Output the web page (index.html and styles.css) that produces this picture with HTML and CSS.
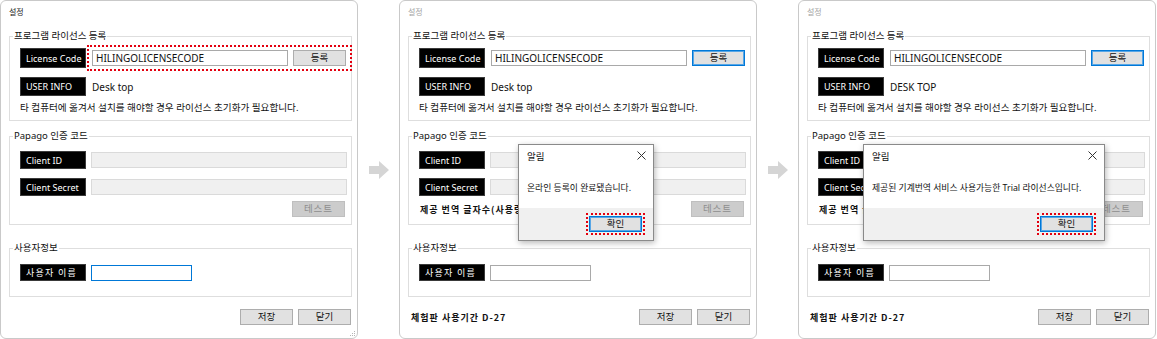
FILE: index.html
```html
<!DOCTYPE html>
<html>

<head>
    <meta charset="utf-8">
    <title>라이선스 등록</title>
    <link rel="stylesheet" href="styles.css">
</head>

<body>
    <div class="flow">

        <!-- Step 1: settings window before registration -->
        <div class="window">
            <div class="win-title">설정</div>

            <fieldset class="group g-license">
                <legend>프로그램 라이선스 등록</legend>
                <div class="row r-code">
                    <span class="tag">License Code</span>
                    <div class="code-box marked">
                        <div class="field f-code">HILINGOLICENSECODE</div>
                        <button class="btn">등록</button>
                    </div>
                </div>
                <div class="row r-info">
                    <span class="tag">USER INFO</span>
                    <span class="info">Desk top</span>
                </div>
                <p class="note">타 컴퓨터에 옮겨서 설치를 해야할 경우 라이선스 초기화가 필요합니다.</p>
            </fieldset>

            <fieldset class="group g-papago">
                <legend>Papago 인증 코드</legend>
                <div class="row r-key">
                    <span class="tag">Client ID</span>
                    <div class="field f-key off"></div>
                </div>
                <div class="row r-key">
                    <span class="tag">Client Secret</span>
                    <div class="field f-key off"></div>
                </div>
                <div class="row r-test">
                    <button class="btn off">테스트</button>
                </div>
            </fieldset>

            <fieldset class="group g-user">
                <legend>사용자정보</legend>
                <div class="row r-user">
                    <span class="tag spaced">사용자 이름</span>
                    <div class="field f-user focus"></div>
                </div>
            </fieldset>

            <div class="footer">
                <span></span>
                <div class="btns">
                    <button class="btn">저장</button>
                    <button class="btn">닫기</button>
                </div>
            </div>

            <svg class="grip" width="8" height="8" viewBox="0 0 8 8">
                <rect x="6" y="2" width="1" height="1" fill="#b5b5b5"/>
                <rect x="4" y="4" width="1" height="1" fill="#b5b5b5"/>
                <rect x="6" y="4" width="1" height="1" fill="#b5b5b5"/>
                <rect x="2" y="6" width="1" height="1" fill="#b5b5b5"/>
                <rect x="4" y="6" width="1" height="1" fill="#b5b5b5"/>
                <rect x="6" y="6" width="1" height="1" fill="#b5b5b5"/>
            </svg>
        </div>

        <div class="arrow">
            <svg width="20" height="18" viewBox="0 0 20 18">
                <polygon points="0,5 10,5 10,0 20,9 10,18 10,13 0,13" fill="#d5d5d5"/>
            </svg>
        </div>

        <!-- Step 2: online registration done -->
        <div class="window inactive">
            <div class="win-title">설정</div>

            <fieldset class="group g-license">
                <legend>프로그램 라이선스 등록</legend>
                <div class="row r-code">
                    <span class="tag">License Code</span>
                    <div class="code-box">
                        <div class="field f-code">HILINGOLICENSECODE</div>
                        <button class="btn focus">등록</button>
                    </div>
                </div>
                <div class="row r-info">
                    <span class="tag">USER INFO</span>
                    <span class="info">Desk top</span>
                </div>
                <p class="note">타 컴퓨터에 옮겨서 설치를 해야할 경우 라이선스 초기화가 필요합니다.</p>
            </fieldset>

            <fieldset class="group g-papago">
                <legend>Papago 인증 코드</legend>
                <div class="row r-key">
                    <span class="tag">Client ID</span>
                    <div class="field f-key off"></div>
                </div>
                <div class="row r-key">
                    <span class="tag">Client Secret</span>
                    <div class="field f-key off"></div>
                </div>
                <div class="row r-test">
                    <span class="strong">제공 번역 글자수(사용량) : 0</span>
                    <button class="btn off">테스트</button>
                </div>
            </fieldset>

            <fieldset class="group g-user">
                <legend>사용자정보</legend>
                <div class="row r-user">
                    <span class="tag spaced">사용자 이름</span>
                    <div class="field f-user"></div>
                </div>
            </fieldset>

            <div class="footer">
                <span class="strong">체험판 사용기간 D-27</span>
                <div class="btns">
                    <button class="btn">저장</button>
                    <button class="btn">닫기</button>
                </div>
            </div>

            <div class="alert a-small">
                <div class="alert-head">
                    <span>알림</span>
                    <svg width="9" height="9" viewBox="0 0 9 9">
                        <path d="M0.5 0.5 L8.5 8.5 M8.5 0.5 L0.5 8.5" stroke="#333" stroke-width="1"/>
                    </svg>
                </div>
                <div class="alert-body">온라인 등록이 완료됐습니다.</div>
                <div class="alert-foot">
                    <button class="btn focus marked-sm">확인</button>
                </div>
            </div>
        </div>

        <div class="arrow">
            <svg width="20" height="18" viewBox="0 0 20 18">
                <polygon points="0,5 10,5 10,0 20,9 10,18 10,13 0,13" fill="#d5d5d5"/>
            </svg>
        </div>

        <!-- Step 3: trial license notice -->
        <div class="window inactive">
            <div class="win-title">설정</div>

            <fieldset class="group g-license">
                <legend>프로그램 라이선스 등록</legend>
                <div class="row r-code">
                    <span class="tag">License Code</span>
                    <div class="code-box">
                        <div class="field f-code">HILINGOLICENSECODE</div>
                        <button class="btn focus">등록</button>
                    </div>
                </div>
                <div class="row r-info">
                    <span class="tag">USER INFO</span>
                    <span class="info">DESK TOP</span>
                </div>
                <p class="note">타 컴퓨터에 옮겨서 설치를 해야할 경우 라이선스 초기화가 필요합니다.</p>
            </fieldset>

            <fieldset class="group g-papago">
                <legend>Papago 인증 코드</legend>
                <div class="row r-key">
                    <span class="tag">Client ID</span>
                    <div class="field f-key off"></div>
                </div>
                <div class="row r-key">
                    <span class="tag">Client Secret</span>
                    <div class="field f-key off"></div>
                </div>
                <div class="row r-test">
                    <span class="strong">제공 번역 글자수(사용량) : 0</span>
                    <button class="btn off">테스트</button>
                </div>
            </fieldset>

            <fieldset class="group g-user">
                <legend>사용자정보</legend>
                <div class="row r-user">
                    <span class="tag spaced">사용자 이름</span>
                    <div class="field f-user"></div>
                </div>
            </fieldset>

            <div class="footer">
                <span class="strong">체험판 사용기간 D-27</span>
                <div class="btns">
                    <button class="btn">저장</button>
                    <button class="btn">닫기</button>
                </div>
            </div>

            <div class="alert a-wide">
                <div class="alert-head">
                    <span>알림</span>
                    <svg width="9" height="9" viewBox="0 0 9 9">
                        <path d="M0.5 0.5 L8.5 8.5 M8.5 0.5 L0.5 8.5" stroke="#333" stroke-width="1"/>
                    </svg>
                </div>
                <div class="alert-body">제공된 기계번역 서비스 사용가능한 Trial 라이선스입니다.</div>
                <div class="alert-foot">
                    <button class="btn focus marked-sm">확인</button>
                </div>
            </div>
        </div>

    </div>
</body>

</html>
```

FILE: styles.css
```css
* {
    box-sizing: border-box;
}

body {
    margin: 0;
    background-color: #fff;
    font-family: "Noto Sans", "Noto Sans CJK KR", sans-serif;
    color: #000;
}

.flow {
    display: flex;
    align-items: flex-start;
}

.arrow {
    width: 41px;
    height: 339px;
    display: flex;
    align-items: center;
    justify-content: center;
}

/* window frame */
.window {
    position: relative;
    width: 358px;
    height: 339px;
    border: 1px solid #c9c9c9;
    border-radius: 6px;
    padding: 3px 5px 0 8px;
    background-color: #fff;
}

.win-title {
    height: 16px;
    line-height: 16px;
    font-size: 8px;
    color: #222;
}

.inactive .win-title {
    color: #a3a3a3;
}

/* group boxes */
.group {
    margin: 0;
    padding: 0 4px 0 0;
    border: 1px solid #dedede;
    min-width: 0;
}

.group legend {
    margin-left: 3px;
    padding: 0 1px;
    font-size: 9.5px;
    line-height: 14px;
    color: #111;
}

.g-license {
    margin-top: 9px;
    padding-top: 5px;
    padding-bottom: 5px;
}

.g-papago {
    margin-top: 8px;
    padding-top: 8px;
    padding-bottom: 7px;
}

.g-user {
    margin-top: 16px;
    padding-top: 9px;
    padding-bottom: 15px;
}

.row {
    display: flex;
    align-items: center;
    padding-left: 10px;
}

.r-code {
    height: 20px;
}

.r-info {
    height: 19px;
    margin-top: 9px;
}

.r-key {
    height: 18px;
}

.r-key + .r-key {
    margin-top: 9px;
}

.r-test {
    height: 16px;
    margin-top: 5px;
    justify-content: space-between;
    padding-left: 11px;
    padding-right: 2px;
}

.r-test .btn {
    margin-left: auto;
}

.r-user {
    height: 17px;
}

.tag {
    width: 66px;
    height: 100%;
    flex: none;
    background-color: #000;
    color: #fff;
    font-size: 9px;
    line-height: 1;
    padding-left: 5px;
    display: flex;
    align-items: center;
    border: 1px solid #3a3a3a;
}

.tag.spaced {
    letter-spacing: 1.2px;
}

.info {
    margin-left: 6px;
    font-size: 10px;
    color: #111;
}

.note {
    margin: 5px 0 0;
    padding-left: 10px;
    font-size: 9.6px;
    line-height: 14px;
    color: #111;
    white-space: nowrap;
}

/* text boxes */
.field {
    height: 16px;
    border: 1px solid #a9a9a9;
    background-color: #fff;
    font-size: 10px;
    line-height: 14px;
    padding-left: 3px;
    color: #111;
}

.field.off {
    background-color: #f0f0f0;
    border-color: #dadada;
}

.field.focus {
    border-color: #0078d7;
}

.f-code {
    width: 196px;
}

.f-key {
    width: 256px;
    margin-left: 5px;
}

.f-user {
    width: 101px;
    margin-left: 5px;
}

.code-box {
    display: flex;
    gap: 5px;
    margin-left: 6px;
}

/* red dotted highlight */
.marked,
.marked-sm {
    position: relative;
}

.marked::after {
    content: "";
    position: absolute;
    top: -5px;
    bottom: -5px;
    left: -5px;
    right: -6px;
    border: 2px dotted #e3000f;
}

.marked-sm::after {
    content: "";
    position: absolute;
    top: -4px;
    bottom: -4px;
    left: -4px;
    right: -4px;
    border: 2px dotted #e3000f;
}

/* buttons */
.btn {
    width: 53px;
    height: 16px;
    padding: 0;
    border: 1px solid #adadad;
    background-color: #e1e1e1;
    font-family: "Noto Sans", "Noto Sans CJK KR", sans-serif;
    font-size: 9.5px;
    line-height: 14px;
    color: #111;
}

.btn.focus {
    border: 1px solid #0078d7;
    box-shadow: inset 0 0 0 1px #57a6e6;
}

.btn.off {
    background-color: #cccccc;
    border-color: #bfbfbf;
    color: #8e8e8e;
    letter-spacing: 1px;
}

.strong {
    font-family: "Noto Sans CJK KR", sans-serif;
    font-weight: bold;
    font-size: 9px;
    letter-spacing: 1px;
    color: #111;
    white-space: nowrap;
}

.footer {
    margin-top: 12px;
    display: flex;
    align-items: center;
    justify-content: space-between;
    padding-left: 3px;
    padding-right: 1px;
}

.btns {
    display: flex;
    gap: 5px;
}

.grip {
    position: absolute;
    right: 1px;
    bottom: 1px;
}

/* message box */
.alert {
    position: absolute;
    top: 143px;
    height: 97px;
    display: flex;
    flex-direction: column;
    background-color: #fff;
    border: 1px solid #8a8a8a;
    box-shadow: 1px 2px 6px rgba(0, 0, 0, 0.28);
}

.a-small {
    left: 118px;
    width: 136px;
}

.a-wide {
    left: 64px;
    width: 242px;
}

.alert-head {
    height: 21px;
    display: flex;
    align-items: center;
    justify-content: space-between;
    padding: 0 7px 0 8px;
    font-size: 9.5px;
    color: #111;
}

.alert-body {
    height: 42px;
    display: flex;
    align-items: center;
    padding-left: 8px;
    font-size: 8.8px;
    color: #111;
    white-space: nowrap;
}

.alert-foot {
    flex: 1;
    background-color: #f0f0f0;
    display: flex;
    justify-content: flex-end;
    padding: 8px 11px 0 0;
}
```
